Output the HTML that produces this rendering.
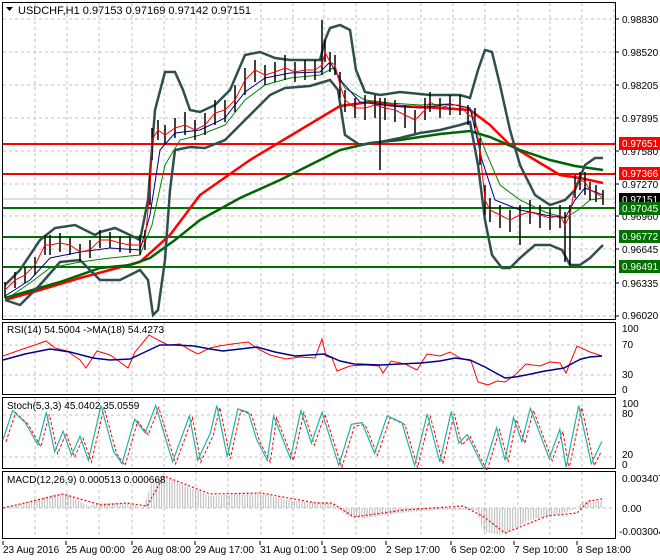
<!DOCTYPE html>
<html><head><meta charset="utf-8"><style>
body{margin:0;background:#fff;}
svg{display:block;font-family:"Liberation Sans",sans-serif;font-size:10px;}
</style></head><body>
<svg width="660" height="560" viewBox="0 0 660 560" xmlns="http://www.w3.org/2000/svg">
<defs>
<pattern id="hb" width="2.6" height="10" patternUnits="userSpaceOnUse"><rect x="0" y="0" width="1" height="10" fill="#b8b8b8"/></pattern>
</defs>
<rect width="660" height="560" fill="#fff"/>
<!-- grid verticals -->
<g stroke="#c0c0c0" stroke-dasharray="3,3" stroke-width="1">
<path d="M35 3V319M67 3V319M99 3V319M132 3V319M164 3V319M196 3V319M228 3V319M261 3V319M293 3V319M324 3V319M356 3V319M388 3V319M421 3V319M453 3V319M485 3V319M518 3V319M550 3V319M582 3V319M614 3V319"/>
<path d="M35 323V394M67 323V394M99 323V394M132 323V394M164 323V394M196 323V394M228 323V394M261 323V394M293 323V394M324 323V394M356 323V394M388 323V394M421 323V394M453 323V394M485 323V394M518 323V394M550 323V394M582 323V394"/>
<path d="M35 398V468M67 398V468M99 398V468M132 398V468M164 398V468M196 398V468M228 398V468M261 398V468M293 398V468M324 398V468M356 398V468M388 398V468M421 398V468M453 398V468M485 398V468M518 398V468M550 398V468M582 398V468"/>
<path d="M35 472V538M67 472V538M99 472V538M132 472V538M164 472V538M196 472V538M228 472V538M261 472V538M293 472V538M324 472V538M356 472V538M388 472V538M421 472V538M453 472V538M485 472V538M518 472V538M550 472V538M582 472V538"/>
<path d="M3 19H615M3 52H615M3 85H615M3 118H615M3 151H615M3 184H615M3 216H615M3 249H615M3 283H615M3 316H615"/>
<path d="M3 345H615M3 375H615M3 415H615M3 457H615M3 508H615"/>
</g>
<!-- horizontal levels -->
<g stroke-width="2">
<path d="M3 144H615M3 174H615" stroke="#ff0000"/>
<path d="M3 208H615M3 237H615M3 267H615" stroke="#007000"/>
</g>
<path d="M3 199H615" stroke="#c0c0c0" stroke-width="1"/>
<!-- slow MAs -->
<polyline fill="none" stroke="#ff0000" stroke-width="2.5" points="5,300 40,290 80,278 140,262 170,235 200,195 250,160 300,130 340,106 370,102 400,106 440,108 470,110 490,125 510,145 540,163 560,175 580,178 603,183"/>
<polyline fill="none" stroke="#006400" stroke-width="2.5" points="5,298 60,282 100,268 130,265 150,258 175,240 200,220 240,198 280,180 310,165 340,150 370,143 400,140 440,134 470,131 490,137 520,150 550,160 575,166 603,170"/>
<!-- bollinger -->
<g fill="none" stroke="#2f4f4f" stroke-width="2.5">
<polyline points="5,285 20,270 40,240 55,228 75,225 95,235 100,232 115,228 130,235 140,240 148,200 155,110 165,72 175,72 183,90 190,110 200,112 215,105 230,90 245,55 260,52 275,58 290,60 320,60 325,40 330,28 340,25 350,30 356,70 365,92 380,95 400,92 430,95 460,95 470,98 478,70 485,50 492,52 500,85 510,130 520,165 535,195 550,205 565,200 575,190 585,165 595,158 603,158"/>
<polyline points="5,300 20,305 40,285 60,262 80,260 100,280 120,280 140,270 148,280 153,315 158,310 165,260 170,190 175,150 190,147 205,148 225,140 240,125 255,110 270,95 285,88 310,86 330,80 338,90 345,135 360,145 380,142 400,138 420,133 440,130 460,125 470,122 478,165 485,220 492,255 502,268 510,268 520,258 535,245 550,245 562,250 570,265 580,265 590,258 603,245"/>
</g>
<!-- fast MAs -->
<polyline fill="none" stroke="#008000" stroke-width="1" points="5,300 30,283 50,268 80,262 110,258 140,255 152,225 165,165 180,140 200,135 225,125 245,100 265,85 290,78 320,75 333,68 345,88 365,100 390,103 420,105 450,104 470,108 485,150 500,185 520,200 545,212 565,218 578,210 590,200 603,198"/>
<polyline fill="none" stroke="#00008b" stroke-width="1" points="5,296 30,280 50,258 80,252 110,248 140,250 150,215 160,150 175,133 200,130 225,118 245,92 265,78 290,73 320,72 330,62 342,82 360,102 390,106 420,108 450,104 470,108 482,160 495,200 520,210 545,215 565,218 575,200 585,188 603,195"/>
<!-- candles -->
<path fill="none" stroke="#000" stroke-width="1.5" d="M5 282V298M15 272V288M25 267V283M35 257V275M45 235V255M50 235V255M60 233V252M70 237V255M80 244V262M90 240V258M100 230V248M110 232V248M120 236V252M130 237V253M140 235V255M145 230V250M150 175V205M152 128V160M158 120V140M165 125V145M175 118V138M185 112V135M195 120V140M205 113V135M215 100V125M225 100V122M235 85V112M245 68V95M255 60V82M265 65V85M275 62V82M285 55V80M295 62V82M305 60V80M315 60V80M322 20V75M325 40V62M330 52V72M335 55V75M340 72V98M345 90V112M355 98V118M365 95V120M375 95V118M380 98V170M385 98V120M395 100V122M405 105V128M415 110V133M425 98V120M430 92V112M440 98V118M450 95V115M460 95V115M468 105V125M475 108V128M480 138V165M485 185V215M490 198V222M500 205V228M510 210V232M520 205V245M530 200V224M540 205V228M550 208V230M560 205V228M565 212V262M570 205V265M575 175V198M580 172V190M585 172V195M590 182V200M596 185V202M603 190V205"/>
<polyline fill="none" stroke="#ff0000" stroke-width="1" points="5,290 15,280 25,275 35,265 45,245 50,245 60,243 70,245 80,252 90,250 100,240 110,240 120,243 130,245 140,245 145,240 150,190 152,140 158,130 165,135 175,128 185,125 195,130 205,125 215,113 225,110 235,100 245,80 255,70 265,75 275,72 285,68 295,72 305,70 315,70 322,65 325,52 330,62 335,65 340,85 345,100 355,108 365,108 375,105 385,108 395,110 405,115 415,120 425,110 430,102 440,108 450,105 460,105 468,115 475,118 480,150 485,200 490,210 500,215 510,220 520,215 530,212 540,215 550,218 560,215 565,225 570,215 575,185 580,180 585,182 590,190 596,193 603,198"/>
<!-- panel borders -->
<g fill="none" stroke="#000" stroke-width="1">
<rect x="2.5" y="2.5" width="613" height="317"/>
<rect x="2.5" y="322.5" width="613" height="72"/>
<rect x="2.5" y="397.5" width="613" height="71"/>
<rect x="2.5" y="471.5" width="613" height="67"/>
<path d="M3 541V545M66 541V545M132 541V545M195 541V545M260 541V545M322 541V545M386 541V545M451 541V545M514 541V545M577 541V545"/>
<path d="M616 19h3M616 52h3M616 85h3M616 118h3M616 151h3M616 184h3M616 216h3M616 249h3M616 283h3M616 316h3"/>
</g>
<!-- header -->
<path d="M6 7h7l-3.5 4z" fill="#000"/>
<text x="18" y="14" font-size="11">USDCHF,H1  0.97153 0.97169 0.97142 0.97151</text>
<!-- price axis -->
<g font-size="10" fill="#000">
<text x="622" y="23">0.98830</text><text x="622" y="56">0.98520</text><text x="622" y="89">0.98205</text>
<text x="622" y="122">0.97895</text><text x="622" y="155">0.97580</text><text x="622" y="188">0.97270</text>
<text x="622" y="220">0.96960</text><text x="622" y="253">0.96645</text><text x="622" y="287">0.96335</text>
<text x="622" y="319">0.96020</text>
</g>
<rect x="619" y="137" width="41" height="13" fill="#ff0000"/><text x="622" y="147" fill="#fff">0.97651</text>
<rect x="619" y="167" width="41" height="13" fill="#ff0000"/><text x="622" y="177" fill="#fff">0.97366</text>
<rect x="619" y="193" width="41" height="13" fill="#000"/><text x="622" y="203" fill="#fff">0.97151</text>
<rect x="619" y="202" width="41" height="13" fill="#007000"/><text x="622" y="212" fill="#fff">0.97045</text>
<rect x="619" y="230" width="41" height="13" fill="#007000"/><text x="622" y="240" fill="#fff">0.96772</text>
<rect x="619" y="260" width="41" height="13" fill="#007000"/><text x="622" y="270" fill="#fff">0.96491</text>
<!-- RSI -->
<polyline fill="none" stroke="#ff0000" stroke-width="1" points="3,356 20,350 35,345 46,341 55,348 67,351 80,360 86,368 97,351 110,355 120,362 128,368 135,352 149,335 158,340 168,345 180,344 190,350 198,354 210,348 219,346 232,344 248,342 260,350 270,355 286,359 300,357 315,358 322,339 326,356 332,358 337,371 350,366 365,365 379,366 383,373 391,361 405,364 417,370 427,354 440,356 450,352 460,358 471,361 478,382 488,385 497,381 505,382 515,375 526,364 540,366 550,362 560,363 566,373 577,346 590,352 602,356"/>
<polyline fill="none" stroke="#00008b" stroke-width="1.5" points="3,360 25,354 50,349 70,352 93,358 110,360 130,359 145,352 160,345 175,345 194,346 210,349 223,351 240,349 257,347 275,352 295,356 310,355 324,354 340,361 354,364 380,365 400,364 421,363 440,361 455,358 470,360 485,367 505,378 515,377 526,375 545,371 564,368 575,362 581,359 590,357 602,356"/>
<text x="7" y="333" font-size="10">RSI(14) 54.5004  -&gt;MA(18) 54.4273</text>
<g font-size="10"><text x="622" y="332">100</text><text x="622" y="348">70</text><text x="622" y="378">30</text><text x="622" y="393">0</text></g>
<!-- Stoch -->
<g transform="translate(3,2)"><polyline fill="none" stroke="#ff0000" stroke-width="1" stroke-dasharray="3,2" points="3,439.7 12.6,410.6 25.3,422.6 37.9,444.8 46.3,412.3 54.7,451.7 63.1,431.2 71.5,455.1 80,436.3 88.4,460.2 101,405.5 113.6,451.7 122,463.6 134.7,419.2 145.2,432.9 155.7,405.5 172.6,461.9 189.4,415.8 197.8,460.2 210.4,432.9 216.8,405.5 227.3,456.8 237.8,408.9 248.3,412.3 256.7,439.7 267.3,460.2 273.6,415.8 290.4,458.5 300.9,410.6 311.4,443.1 322,412.3 338.8,465.4 351.4,424.3 362,422.6 374.6,453.4 387.2,415.8 401.9,422.6 414.6,465.4 427.2,414 439.8,461.9 451.2,411.7 458.8,443.1 467.2,434.6 484,468.8 496.6,427.7 505,460.2 513.5,417.5 521.9,441.4 530.3,408.2 549.2,458.5 559.8,429.4 566.1,467.1 578.7,405.5 591.3,463.6 598,450"/></g>
<polyline fill="none" stroke="#20b2aa" stroke-width="1.2" points="3,439.7 12.6,410.6 25.3,422.6 37.9,444.8 46.3,412.3 54.7,451.7 63.1,431.2 71.5,455.1 80,436.3 88.4,460.2 101,405.5 113.6,451.7 122,463.6 134.7,419.2 145.2,432.9 155.7,405.5 172.6,461.9 189.4,415.8 197.8,460.2 210.4,432.9 216.8,405.5 227.3,456.8 237.8,408.9 248.3,412.3 256.7,439.7 267.3,460.2 273.6,415.8 290.4,458.5 300.9,410.6 311.4,443.1 322,412.3 338.8,465.4 351.4,424.3 362,422.6 374.6,453.4 387.2,415.8 401.9,422.6 414.6,465.4 427.2,414 439.8,461.9 451.2,411.7 458.8,443.1 467.2,434.6 484,468.8 496.6,427.7 505,460.2 513.5,417.5 521.9,441.4 530.3,408.2 549.2,458.5 559.8,429.4 566.1,467.1 578.7,405.5 591.3,463.6 601.9,441.4"/>
<text x="7" y="409" font-size="10">Stoch(5,3,3) 45.0402 35.0559</text>
<g font-size="10"><text x="622" y="407">100</text><text x="622" y="417">80</text><text x="622" y="458">20</text><text x="622" y="468">0</text></g>
<!-- MACD -->
<polygon fill="url(#hb)" points="3,508 25,503 55,494 67,494 88,506 101,503 126,503 143,508 152,482 162,476 177,482 210,496 248,493 261,494 295,501 332,503 337,508"/>
<polygon fill="url(#hb)" points="337,508 349,517 366,518 400,513 438,510 476,510 484,532 501,535 530,520 564,513 577,508"/>
<polygon fill="url(#hb)" points="577,508 583,501 602,501 602,508"/>
<polyline fill="none" stroke="#ff0000" stroke-width="1.2" stroke-dasharray="2,2" points="3,508 63,494 101,505 126,503 147,506 164,476 210,494 261,493 316,503 332,503 354,517 404,510 463,506 484,517 505,533 547,516 577,513 589,501 602,499"/>
<text x="7" y="483" font-size="10">MACD(12,26,9) 0.000513 0.000668</text>
<g font-size="10"><text x="622" y="482">0.003407</text><text x="622" y="512">0.00</text><text x="619" y="535">-0.003004</text></g>
<!-- date axis -->
<g font-size="10">
<text x="3" y="553">23 Aug 2016</text><text x="66" y="553">25 Aug 00:00</text><text x="132" y="553">26 Aug 08:00</text>
<text x="195" y="553">29 Aug 17:00</text><text x="260" y="553">31 Aug 01:00</text><text x="322" y="553">1 Sep 09:00</text>
<text x="386" y="553">2 Sep 17:00</text><text x="451" y="553">6 Sep 02:00</text><text x="514" y="553">7 Sep 10:00</text>
<text x="577" y="553">8 Sep 18:00</text>
</g>
</svg>
</body></html>
